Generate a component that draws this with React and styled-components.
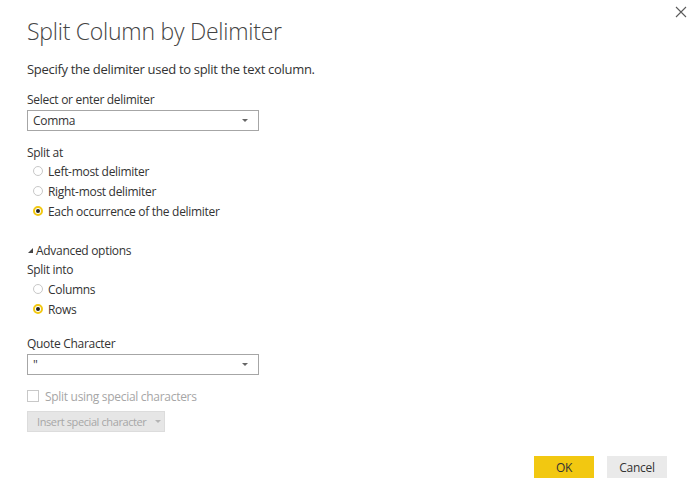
import React, { useState } from 'react';
import styled, { createGlobalStyle } from 'styled-components';

const Global = createGlobalStyle`
    html, body {
        margin: 0;
        padding: 0;
        background: #ffffff;
    }
    body {
        font-family: "Open Sans", "Noto Sans", sans-serif;
        color: #333333;
    }
`;

const Dialog = styled.div`
    position: relative;
    width: 694px;
    height: 489px;
    box-sizing: border-box;
    padding: 15px 27px 0 27px;
    background: #ffffff;
    display: flex;
    flex-direction: column;
`;

const Close = styled.button`
    position: absolute;
    top: 6px;
    right: 7px;
    width: 12px;
    height: 12px;
    padding: 0;
    border: none;
    background: transparent;
    cursor: pointer;

    svg {
        display: block;
    }
`;

const Title = styled.h1`
    margin: 0;
    font-size: 23px;
    font-weight: 300;
    line-height: 32px;
    letter-spacing: -0.25px;
    color: #444444;
`;

const Description = styled.p`
    margin: 12px 0 0 0;
    font-size: 13px;
    line-height: 20px;
    letter-spacing: -0.3px;
`;

const Label = styled.div`
    margin-top: ${props => props.gap || 0}px;
    font-size: 12px;
    line-height: 20px;
    letter-spacing: -0.3px;
    color: #333333;
`;

const Select = styled.div`
    width: 232px;
    height: 21px;
    box-sizing: border-box;
    border: 1px solid #a6a6a6;
    display: flex;
    align-items: center;
    justify-content: space-between;
    padding: 0 10px 0 5px;
    font-size: 12px;
    letter-spacing: -0.3px;
`;

const Caret = styled.span`
    width: 0;
    height: 0;
    border-left: 3px solid transparent;
    border-right: 3px solid transparent;
    border-top: 3px solid ${props => props.color || '#666666'};
`;

const RadioGroup = styled.div`
    margin-top: ${props => props.offset || 0}px;
    display: flex;
    flex-direction: column;
    padding-left: 6px;
`;

const RadioRow = styled.label`
    display: flex;
    align-items: center;
    gap: 5px;
    height: 20px;
    font-size: 12px;
    letter-spacing: -0.3px;
    cursor: pointer;
`;

const RadioDot = styled.span`
    width: 10px;
    height: 10px;
    box-sizing: border-box;
    border-radius: 50%;
    border: ${props => props.checked ? '2px solid #f2c811' : '1px solid #c8c8c8'};
    display: flex;
    align-items: center;
    justify-content: center;

    &::after {
        content: '';
        width: 4px;
        height: 4px;
        border-radius: 50%;
        background: #252423;
        display: ${props => props.checked ? 'block' : 'none'};
    }
`;

const Toggle = styled.div`
    margin-top: 19px;
    display: flex;
    align-items: center;
    gap: 2px;
    height: 20px;
    font-size: 12px;
    letter-spacing: -0.3px;
    cursor: pointer;
`;

const CheckRow = styled.div`
    margin-top: 11px;
    display: flex;
    align-items: center;
    gap: 6px;
    height: 20px;
    font-size: 12px;
    letter-spacing: -0.3px;
    color: #a6a6a6;
`;

const CheckBox = styled.span`
    width: 12px;
    height: 12px;
    box-sizing: border-box;
    border: 1px solid #c8c8c8;
    background: #ffffff;
`;

const InsertButton = styled.div`
    margin-top: 5px;
    width: 138px;
    height: 21px;
    box-sizing: border-box;
    background: #e6e6e6;
    border: 1px solid #dcdcdc;
    display: flex;
    align-items: center;
    gap: 9px;
    padding-left: 9px;
    font-size: 11px;
    letter-spacing: -0.4px;
    white-space: nowrap;
    color: #a6a6a6;
`;

const Footer = styled.div`
    margin-top: auto;
    margin-bottom: 11px;
    display: flex;
    justify-content: flex-end;
    gap: 13px;
`;

const Button = styled.button`
    width: 60px;
    height: 22px;
    border: none;
    padding: 0;
    font-family: inherit;
    font-size: 12px;
    letter-spacing: -0.3px;
    color: #333333;
    background: ${props => props.primary ? '#f2c811' : '#eaeaea'};
    cursor: pointer;
`;

const Radio = ({ label, checked, onSelect }) => (
    <RadioRow onClick={onSelect}>
        <RadioDot checked={checked} />
        {label}
    </RadioRow>
);

const App = () => {
    const [splitAt, setSplitAt] = useState('each');
    const [splitInto, setSplitInto] = useState('rows');

    return (
        <>
            <Global />
            <Dialog>
                <Close aria-label="Close">
                    <svg width="12" height="12" viewBox="0 0 12 12">
                        <path d="M1 1 L11 11 M11 1 L1 11" stroke="#5a5a5a" strokeWidth="1.1" fill="none" />
                    </svg>
                </Close>
                <Title>Split Column by Delimiter</Title>
                <Description>Specify the delimiter used to split the text column.</Description>

                <Label gap={11}>Select or enter delimiter</Label>
                <Select>
                    Comma
                    <Caret />
                </Select>

                <Label gap={12}>Split at</Label>
                <RadioGroup offset={-2}>
                    <Radio label="Left-most delimiter" checked={splitAt === 'left'} onSelect={() => setSplitAt('left')} />
                    <Radio label="Right-most delimiter" checked={splitAt === 'right'} onSelect={() => setSplitAt('right')} />
                    <Radio label="Each occurrence of the delimiter" checked={splitAt === 'each'} onSelect={() => setSplitAt('each')} />
                </RadioGroup>

                <Toggle>
                    <svg width="7" height="7" viewBox="0 0 7 7">
                        <path d="M6 1 L6 6 L1 6 Z" fill="#444444" />
                    </svg>
                    Advanced options
                </Toggle>
                <Label>Split into</Label>
                <RadioGroup offset={-1}>
                    <Radio label="Columns" checked={splitInto === 'columns'} onSelect={() => setSplitInto('columns')} />
                    <Radio label="Rows" checked={splitInto === 'rows'} onSelect={() => setSplitInto('rows')} />
                </RadioGroup>

                <Label gap={15}>Quote Character</Label>
                <Select>
                    "
                    <Caret />
                </Select>

                <CheckRow>
                    <CheckBox />
                    Split using special characters
                </CheckRow>
                <InsertButton>
                    Insert special character
                    <Caret color="#b4b4b4" />
                </InsertButton>

                <Footer>
                    <Button primary>OK</Button>
                    <Button>Cancel</Button>
                </Footer>
            </Dialog>
        </>
    );
};

export default App;
